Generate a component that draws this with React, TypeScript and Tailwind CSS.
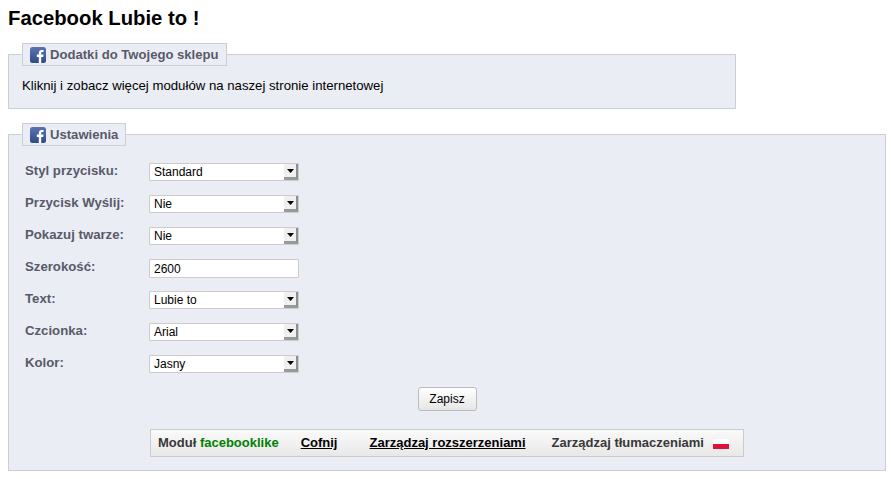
import React from "react";

function Fb() {
  return (
    <svg width="16" height="16" viewBox="0 0 16 16" className="shrink-0">
      <defs>
        <linearGradient id="fbg" x1="0" y1="0" x2="0" y2="1">
          <stop offset="0" stopColor="#5a75ad" />
          <stop offset="1" stopColor="#2f4a88" />
        </linearGradient>
      </defs>
      <rect x="0" y="0" width="16" height="16" rx="2.5" fill="url(#fbg)" />
      <path d="M11.2 16V10h2l.3-2.4h-2.3V6.2c0-.7.2-1.1 1.2-1.1h1.2V3c-.3 0-1-.1-1.8-.1-1.8 0-3 1.1-3 3.1v1.6h-2V10h2v6z" fill="#fff" />
    </svg>
  );
}

function Legend({ children }: { children: React.ReactNode }) {
  return (
    <legend className="ml-[13px] flex h-[23px] items-center gap-[4px] border border-[#ccced7] bg-[#ebedf4] pl-[7px] pr-[7px] text-[13.1px] font-bold text-[#585a69]">
      <Fb />
      <span>{children}</span>
    </legend>
  );
}

function Select({ value }: { value: string }) {
  return (
    <div className="flex h-[18px] w-[150px] items-stretch border border-[#cccccc] bg-white">
      <span className="flex-1 pl-[4px] text-[12px] leading-[16px] text-black">{value}</span>
      <span className="flex w-[14px] items-center justify-center border-b-[3px] border-r-2 border-b-[#9a9a9a] border-r-[#8f8f8f] bg-[#f0f0f0]">
        <svg width="7" height="4" viewBox="0 0 7 4">
          <path d="M0 0h7L3.5 4z" fill="#000" />
        </svg>
      </span>
    </div>
  );
}

function Row({ label, children }: { label: string; children: React.ReactNode }) {
  return (
    <div className="flex h-[32px] items-start">
      <label className="w-[124px] text-[13.2px] font-bold leading-[16px] text-[#585a69]">{label}</label>
      <div>{children}</div>
    </div>
  );
}

export default function App() {
  return (
    <div className="min-h-[479px] bg-white px-[8px] font-['Liberation_Sans',Arial,sans-serif] text-black">
      <h2 className="pt-[8px] text-[20.3px] font-bold leading-[21px] text-black">Facebook Lubie to !</h2>
      <fieldset className="mt-[14px] h-[66px] w-[728px] border border-[#ccced7] bg-[#ebedf4]">
        <Legend>Dodatki do Twojego sklepu</Legend>
        <p className="pl-[13px] pt-[12px] text-[13.2px] leading-[16px]">Kliknij i zobacz więcej modułów na naszej stronie internetowej</p>
      </fieldset>
      <fieldset className="mt-[14px] h-[348px] w-[878px] border border-[#ccced7] bg-[#ebedf4]">
        <Legend>Ustawienia</Legend>
        <div className="pl-[16px] pt-[17px]">
          <Row label="Styl przycisku:"><Select value="Standard" /></Row>
          <Row label="Przycisk Wyślij:"><Select value="Nie" /></Row>
          <Row label="Pokazuj twarze:"><Select value="Nie" /></Row>
          <Row label="Szerokość:">
            <input readOnly value="2600" className="block h-[19px] w-[150px] border border-[#cccccc] bg-white pl-[4px] text-[12px] text-black outline-none" />
          </Row>
          <Row label="Text:"><Select value="Lubie to" /></Row>
          <Row label="Czcionka:"><Select value="Arial" /></Row>
          <Row label="Kolor:"><Select value="Jasny" /></Row>
        </div>
        <div className="flex flex-col items-center">
          <button className="h-[24px] w-[59px] rounded-[3px] border border-[#bbbbbb] bg-gradient-to-b from-white to-[#e6e6e6] text-[12px] text-black">Zapisz</button>
          <div className="mt-[18px] flex h-[28px] w-[594px] items-center border border-[#cccccc] bg-gradient-to-b from-[#fafafa] to-[#e8e8e8] pl-[7px] text-[13px] font-bold text-[#383838]">
            <span>Moduł <span className="text-[#008000]">facebooklike</span></span>
            <a className="ml-[22px] text-black underline">Cofnij</a>
            <a className="ml-[32px] text-black underline">Zarządzaj rozszerzeniami</a>
            <span className="ml-[26px]">Zarządzaj tłumaczeniami</span>
            <span className="ml-[9px] mt-[2px] flex h-[10px] w-[16px] flex-col">
              <span className="h-[5px] bg-white" />
              <span className="h-[5px] bg-[#dc143c]" />
            </span>
          </div>
        </div>
      </fieldset>
    </div>
  );
}
